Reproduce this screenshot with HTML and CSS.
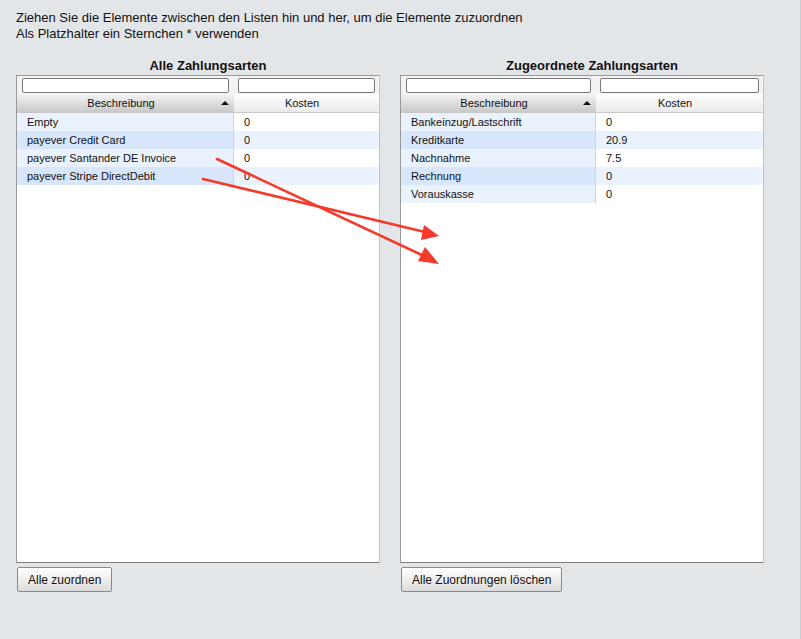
FILE: index.html
```html
<!DOCTYPE html>
<html lang="de">
<head>
<meta charset="utf-8">
<title>Zahlungsarten zuordnen</title>
<link rel="stylesheet" href="styles.css">
</head>
<body>
<div class="page">
  <div class="intro">
    <div>Ziehen Sie die Elemente zwischen den Listen hin und her, um die Elemente zuzuordnen</div>
    <div>Als Platzhalter ein Sternchen * verwenden</div>
  </div>
  <div class="lists">
    <div class="col">
      <div class="title">Alle Zahlungsarten</div>
      <div class="panel">
        <div class="filters">
          <div class="fcell fdesc"><input class="finput" type="text"></div>
          <div class="fcell fcost"><input class="finput" type="text"></div>
        </div>
        <div class="head">
          <div class="hdesc">Beschreibung<span class="sort"></span></div>
          <div class="hcost">Kosten</div>
        </div>
        <div class="row"><div class="cdesc">Empty</div><div class="ccost">0</div></div>
        <div class="row alt"><div class="cdesc">payever Credit Card</div><div class="ccost">0</div></div>
        <div class="row"><div class="cdesc">payever Santander DE Invoice</div><div class="ccost">0</div></div>
        <div class="row alt"><div class="cdesc">payever Stripe DirectDebit</div><div class="ccost">0</div></div>
      </div>
      <div class="actions"><button class="btn">Alle zuordnen</button></div>
    </div>
    <div class="col">
      <div class="title">Zugeordnete Zahlungsarten</div>
      <div class="panel assigned">
        <div class="filters">
          <div class="fcell fdesc"><input class="finput" type="text"></div>
          <div class="fcell fcost"><input class="finput" type="text"></div>
        </div>
        <div class="head">
          <div class="hdesc">Beschreibung<span class="sort"></span></div>
          <div class="hcost">Kosten</div>
        </div>
        <div class="row"><div class="cdesc">Bankeinzug/Lastschrift</div><div class="ccost">0</div></div>
        <div class="row alt"><div class="cdesc">Kreditkarte</div><div class="ccost">20.9</div></div>
        <div class="row"><div class="cdesc">Nachnahme</div><div class="ccost">7.5</div></div>
        <div class="row alt"><div class="cdesc">Rechnung</div><div class="ccost">0</div></div>
        <div class="row"><div class="cdesc">Vorauskasse</div><div class="ccost">0</div></div>
      </div>
      <div class="actions"><button class="btn">Alle Zuordnungen löschen</button></div>
    </div>
  </div>
</div>
<svg class="arrows" width="801" height="639" viewBox="0 0 801 639">
  <g stroke="#f43a2b" stroke-width="2.6" stroke-linecap="round" fill="none">
    <line x1="217" y1="159" x2="426" y2="257"/>
    <line x1="203" y1="179" x2="425" y2="232"/>
  </g>
  <g fill="#f43a2b">
    <polygon points="439,264 418,261 425,247"/>
    <polygon points="439,236 421,240 424,225"/>
  </g>
</svg>
</body>
</html>
```
FILE: styles.css
```css
html {
  background: linear-gradient(to left, #c9ccd0 1px, #e3e6e9 1px);
  height: 100%;
}
body {
  margin: 0;
  font-family: "Liberation Sans", Arial, sans-serif;
  font-size: 12px;
  color: #111;
  position: relative;
  height: 100%;
}
.page {
  padding: 10px 0 0 16px;
}
.intro {
  font-size: 13px;
  line-height: 16px;
}
.lists {
  display: flex;
  margin-top: 16px;
}
.col {
  width: 384px;
}
.title {
  font-size: 13px;
  font-weight: bold;
  text-align: center;
  line-height: 16px;
  height: 17px;
}
.panel {
  --dw: 217px;
  box-sizing: border-box;
  width: 364px;
  height: 488px;
  background: #fff;
  border: 1px solid #999;
  border-right-color: #c4c4c4;
  border-bottom-color: #7d7d7d;
}
.panel.assigned {
  --dw: 195px;
}
.filters,
.head,
.row {
  display: grid;
  grid-template-columns: var(--dw) 1fr;
}
.filters {
  height: 18px;
  background: #f3f3f3;
}
.fcell {
  padding: 2px 5px 0 5px;
}
.fcost {
  padding-left: 4px;
  padding-right: 4px;
}
.finput {
  display: block;
  box-sizing: border-box;
  width: 100%;
  height: 15px;
  margin: 0;
  border: 1px solid #7a7a7a;
  border-radius: 2px;
  background: #fff;
  padding: 0;
}
.head {
  box-sizing: border-box;
  height: 19px;
  line-height: 18px;
  font-size: 11px;
  text-align: center;
  border-bottom: 1px solid #c8c8c8;
}
.hdesc {
  position: relative;
  padding-right: 9px;
  background: linear-gradient(#f4f4f4, #c9c9c9);
}
.hcost {
  padding-right: 9px;
  background: linear-gradient(#ffffff, #eaeaea);
}
.sort {
  position: absolute;
  right: 5px;
  top: 7px;
  width: 0;
  height: 0;
  border-left: 4px solid transparent;
  border-right: 4px solid transparent;
  border-bottom: 4px solid #111;
}
.row {
  height: 18px;
  line-height: 18px;
  font-size: 11px;
}
.cdesc {
  padding-left: 10px;
  background: #eaf2fe;
  border-right: 1px solid #d4d4d4;
}
.ccost {
  padding-left: 10px;
  background: #fff;
}
.row.alt .cdesc { background: #d7e6fb; }
.row.alt .ccost { background: #eaf2fe; }
.actions {
  padding: 4px 0 0 1px;
}
.btn {
  height: 25px;
  padding: 0 10px;
  font-family: "Liberation Sans", Arial, sans-serif;
  font-size: 12px;
  color: #111;
  border: 1px solid #8a8a8a;
  border-radius: 2px;
  background: linear-gradient(#ffffff, #dcdcdc);
}
.arrows {
  position: absolute;
  left: 0;
  top: 0;
  pointer-events: none;
}
```
